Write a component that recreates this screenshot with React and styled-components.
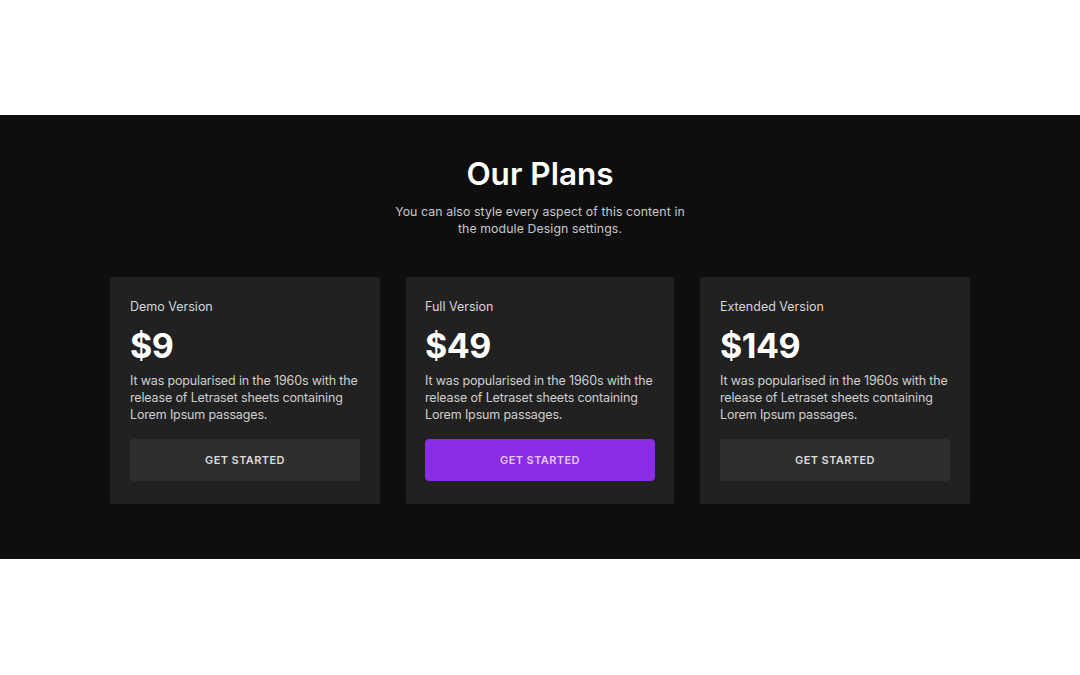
import React from "react";
import styled, { createGlobalStyle } from "styled-components";

const GlobalStyle = createGlobalStyle`
  html, body { margin: 0; padding: 0; background: #ffffff; }
  body { font-family: Inter, "Noto Sans", sans-serif; }
  * { box-sizing: border-box; }
`;

const Page = styled.div`
  width: 1080px;
  height: 675px;
  padding-top: 115px;
  background: #ffffff;
`;

const Section = styled.section`
  background: #0e0e0e;
  height: 444px;
  padding-top: 40px;
  display: flex;
  flex-direction: column;
  align-items: center;
`;

const Heading = styled.h2`
  margin: 0;
  color: #ffffff;
  font-size: 31.5px;
  line-height: 37px;
  font-weight: 600;
`;

const Subtitle = styled.p`
  margin: 11px 0 0;
  width: 300px;
  text-align: center;
  color: #c9c9c9;
  font-size: 12.3px;
  line-height: 17px;
  letter-spacing: 0.1px;
`;

const Cards = styled.div`
  margin-top: 40px;
  display: grid;
  grid-template-columns: 270px 268px 270px;
  gap: 26px;
`;

const Card = styled.div`
  background: #212121;
  border-radius: 2px;
  padding: 21px ${(props) => (props.narrow ? "19px" : "20px")} 23px;
  display: flex;
  flex-direction: column;
`;

const PlanName = styled.div`
  color: #d6d6d6;
  font-size: 12.5px;
  line-height: 18px;
`;

const Price = styled.div`
  margin-top: 10px;
  color: #ffffff;
  font-size: 34px;
  line-height: 40px;
  font-weight: 700;
  letter-spacing: -0.5px;
`;

const Desc = styled.p`
  margin: 6px 0 0;
  color: #cfcfcf;
  font-size: 12.5px;
  line-height: 17px;
  letter-spacing: -0.15px;
`;

const Button = styled.button`
  margin-top: 16px;
  height: 42px;
  width: 100%;
  border: none;
  border-radius: 4px;
  background: ${(props) => (props.primary ? "#8a2be6" : "#2e2e2e")};
  color: ${(props) => (props.primary ? "#e4c8ff" : "#dcdcdc")};
  font-family: inherit;
  font-size: 11px;
  font-weight: 600;
  letter-spacing: 0.4px;
  text-transform: uppercase;
  cursor: pointer;
`;

const plans = [
  { name: "Demo Version", price: "$9" },
  { name: "Full Version", price: "$49", primary: true },
  { name: "Extended Version", price: "$149" },
];

const App = () => {
  return (
    <>
      <GlobalStyle />
      <Page>
        <Section>
          <Heading>Our Plans</Heading>
          <Subtitle>
            You can also style every aspect of this content in the module Design settings.
          </Subtitle>
          <Cards>
            {plans.map((p) => (
              <Card key={p.name} narrow={p.primary}>
                <PlanName>{p.name}</PlanName>
                <Price>{p.price}</Price>
                <Desc>
                  It was popularised in the 1960s with the release of Letraset sheets containing
                  Lorem Ipsum passages.
                </Desc>
                <Button primary={p.primary}>Get Started</Button>
              </Card>
            ))}
          </Cards>
        </Section>
      </Page>
    </>
  );
};

export default App;
